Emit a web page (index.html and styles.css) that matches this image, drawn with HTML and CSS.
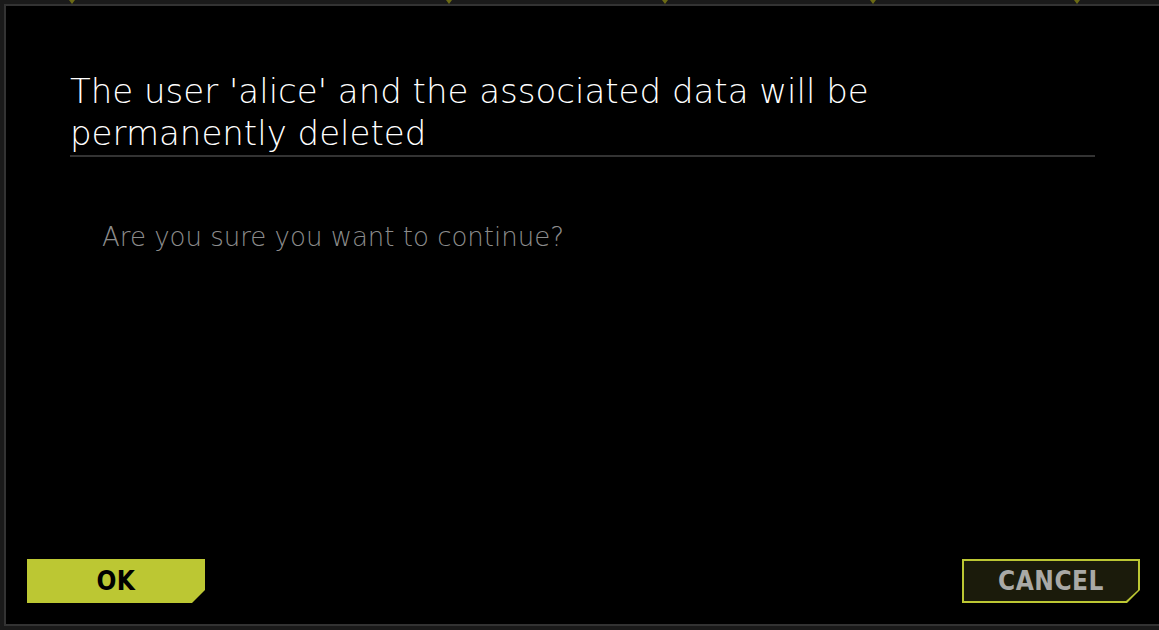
FILE: index.html
```html
<!DOCTYPE html>
<html lang="en">
<head>
<meta charset="utf-8">
<title>Delete user</title>
<link rel="stylesheet" href="styles.css">
</head>
<body>
<div class="ticks">
  <span class="tick t1"></span>
  <span class="tick t2"></span>
  <span class="tick t3"></span>
  <span class="tick t4"></span>
  <span class="tick t5"></span>
</div>
<div class="dialog">
  <div class="header">
    <h1 class="title">The user 'alice' and the associated data will be permanently deleted</h1>
  </div>
  <p class="message">Are you sure you want to continue?</p>
  <div class="footer">
    <button class="btn btn-ok">OK</button>
    <button class="btn btn-cancel"><span class="label">CANCEL</span></button>
  </div>
</div>
</body>
</html>
```
FILE: styles.css
```css
html, body {
  margin: 0;
  padding: 0;
}
body {
  width: 1159px;
  height: 630px;
  overflow: hidden;
  background: #1a1a1a;
  padding: 4px 0 0 4px;
  box-sizing: border-box;
  position: relative;
  font-family: "DejaVu Sans Condensed", "DejaVu Sans", sans-serif;
}
.ticks {
  position: absolute;
  top: 0;
  left: 0;
  width: 100%;
  height: 4px;
}
.tick {
  position: absolute;
  top: 0;
  width: 0;
  height: 0;
  border-left: 3px solid transparent;
  border-right: 3px solid transparent;
  border-top: 4px solid #6b6a14;
}
.t1 { left: 69px; }
.t2 { left: 446px; }
.t3 { left: 662px; }
.t4 { left: 870px; }
.t5 { left: 1074px; }

.dialog {
  width: 1159px;
  height: 622px;
  box-sizing: border-box;
  background: #000;
  border: 2px solid #333;
  display: flex;
  flex-direction: column;
  padding: 0 66px 21px 21px;
}
.header {
  margin: 0 0 0 43px;
  padding: 64px 0 0;
  border-bottom: 2px solid #333;
}
.title {
  margin: 0;
  padding-bottom: 1px;
  font-family: "DejaVu Sans", sans-serif;
  font-weight: 200;
  font-size: 34px;
  line-height: 42px;
  color: #fff;
  max-width: 830px;
}
.message {
  margin: 64px 0 0 75px;
  font-family: "DejaVu Sans", sans-serif;
  font-size: 26px;
  line-height: 32px;
  color: #8c8c8c;
  font-weight: 200;
}
.footer {
  margin-top: auto;
  display: flex;
  justify-content: space-between;
  align-items: flex-end;
  margin-right: -45px;
}
.btn {
  width: 178px;
  height: 44px;
  border: 0;
  padding: 0;
  font-family: "DejaVu Sans Condensed", "DejaVu Sans", sans-serif;
  font-size: 26px;
  font-weight: 700;
  letter-spacing: 0.5px;
  cursor: pointer;
  clip-path: polygon(0 0, 100% 0, 100% 31px, 165px 100%, 0 100%);
}
.btn-ok {
  background: #bcc733;
  color: #000;
}
.btn-cancel {
  background: #bcc733;
  position: relative;
  color: #a9a9a6;
}
.btn-cancel::before {
  content: "";
  position: absolute;
  inset: 2px;
  background: #1b1b0b;
  clip-path: polygon(0 0, 100% 0, 100% 29px, 162px 100%, 0 100%);
}
.btn-cancel .label {
  position: relative;
}
```
